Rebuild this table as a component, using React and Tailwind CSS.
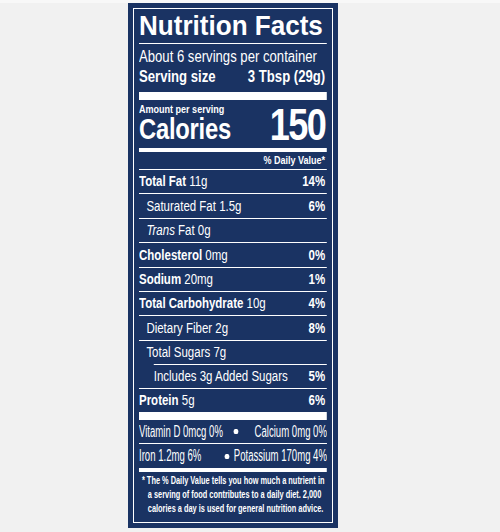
export default function App() {
    return (
        <div className="min-h-[532px] bg-[#f1f1f1] border-t-[3px] border-[#f8f8f8] font-['Liberation_Sans',Arial,sans-serif] text-white">
            <div className="ml-[128px] w-[210px] h-[525px] bg-[#1a3363] p-[5px]">
                <div className="h-full border border-white px-[5px]">
                    {/* condensed look: lay out wide, squeeze horizontally */}
                    <div className="w-[229px] origin-left scale-x-[0.82]">
                        <h1 className="mt-[3px] text-[28px] font-bold leading-[28px] whitespace-nowrap">
                            <span className="inline-block origin-left scale-x-[1.135]">Nutrition Facts</span>
                        </h1>
                        <div className="mt-[3px] h-px bg-white" />
                        <p className="mt-[3px] text-[16px] leading-[20px] whitespace-nowrap">About 6 servings per container</p>
                        <div className="flex justify-between pr-[2px] text-[16px] font-bold leading-[20px] whitespace-nowrap">
                            <span>Serving size</span>
                            <span>3 Tbsp (29g)</span>
                        </div>
                        <div className="mt-[5px] h-[8px] bg-white" />

                        <div className="mt-[3px] flex items-end justify-between pr-[2px]">
                            <div>
                                <p className="text-[11px] font-bold leading-[12px]">Amount per serving</p>
                                <p className="text-[29px] font-bold leading-[28px] tracking-[-0.3px]">Calories</p>
                            </div>
                            <span className="text-[44px] font-bold leading-[36px] tracking-[-2px]">150</span>
                        </div>
                        <div className="mt-[5px] h-[4px] bg-white" />
                        <p className="pr-[2px] text-right text-[11px] font-bold leading-[17px]">% Daily Value*</p>

                        <div className="text-[14px] whitespace-nowrap">
                            <div className="flex h-[24px] items-center justify-between border-t border-white pr-[2px]">
                                <span><b>Total Fat</b> 11g</span>
                                <b>14%</b>
                            </div>
                            <div className="flex h-[25px] items-center justify-between border-t border-white pl-[9px] pr-[2px]">
                                <span>Saturated Fat 1.5g</span>
                                <b>6%</b>
                            </div>
                            <div className="flex h-[24px] items-center justify-between border-t border-white pl-[9px] pr-[2px]">
                                <span><i>Trans</i> Fat 0g</span>
                            </div>
                            <div className="flex h-[25px] items-center justify-between border-t border-white pr-[2px]">
                                <span><b>Cholesterol</b> 0mg</span>
                                <b>0%</b>
                            </div>
                            <div className="flex h-[24px] items-center justify-between border-t border-white pr-[2px]">
                                <span><b>Sodium</b> 20mg</span>
                                <b>1%</b>
                            </div>
                            <div className="flex h-[24px] items-center justify-between border-t border-white pr-[2px]">
                                <span><b>Total Carbohydrate</b> 10g</span>
                                <b>4%</b>
                            </div>
                            <div className="flex h-[25px] items-center justify-between border-t border-white pl-[9px] pr-[2px]">
                                <span>Dietary Fiber 2g</span>
                                <b>8%</b>
                            </div>
                            <div className="flex h-[24px] items-center justify-between border-t border-white pl-[9px] pr-[2px]">
                                <span>Total Sugars 7g</span>
                            </div>
                            <div className="ml-[18px] flex h-[24px] items-center justify-between border-t border-white pr-[2px]">
                                <span>Includes 3g Added Sugars</span>
                                <b>5%</b>
                            </div>
                            <div className="flex h-[24px] items-center justify-between border-t border-white pr-[2px]">
                                <span><b>Protein</b> 5g</span>
                                <b>6%</b>
                            </div>
                            <div className="h-[8px] bg-white" />
                            {/* vitamins/minerals are set taller and tighter */}
                            <div className="flex h-[23px] w-[314px] origin-left scale-x-[0.73] items-center text-[16px]">
                                <span>Vitamin D 0mcg 0%</span>
                                <span className="ml-[18px] h-[5px] w-[8px] rounded-full bg-white" />
                                <span className="ml-auto">Calcium 0mg 0%</span>
                            </div>
                            <div className="flex h-[25px] w-[314px] origin-left scale-x-[0.73] items-center justify-between border-t border-white text-[16px]">
                                <span>Iron 1.2mg 6%</span>
                                <span className="flex items-center gap-[7px]">
                                    <span className="h-[5px] w-[8px] rounded-full bg-white" />
                                    Potassium 170mg 4%
                                </span>
                            </div>
                            <div className="h-[4px] bg-white" />
                        </div>

                        <p className="mt-[2px] w-[254px] origin-left scale-x-[0.9] pl-[12px] -indent-[8px] text-[10px] font-bold leading-[14px] whitespace-nowrap">
                            * The % Daily Value tells you how much a nutrient in
                            <br />
                            a serving of food contributes to a daily diet. 2,000
                            <br />
                            calories a day is used for general nutrition advice.
                        </p>
                    </div>
                </div>
            </div>
        </div>
    );
}
